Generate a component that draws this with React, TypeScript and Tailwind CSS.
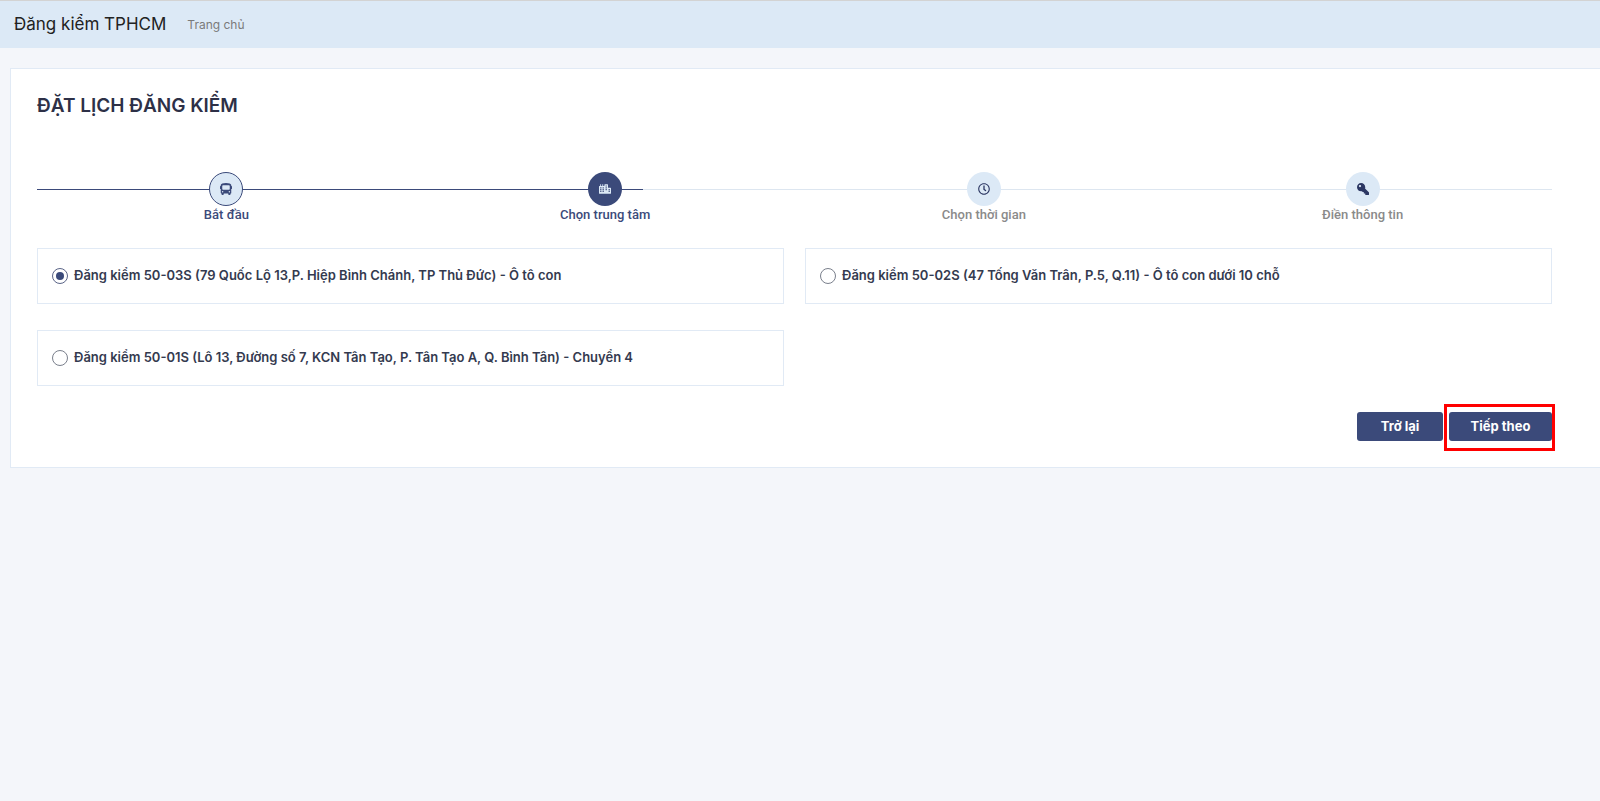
import { FaBus, FaCity, FaRegClock, FaKey } from "react-icons/fa";

const steps = [
  { label: "Bắt đầu", icon: FaBus, state: "done" },
  { label: "Chọn trung tâm", icon: FaCity, state: "active" },
  { label: "Chọn thời gian", icon: FaRegClock, state: "todo" },
  { label: "Điền thông tin", icon: FaKey, state: "todo" },
] as const;

const centers = [
  { id: "50-03S", text: "Đăng kiểm 50-03S (79 Quốc Lộ 13,P. Hiệp Bình Chánh, TP Thủ Đức) - Ô tô con" },
  { id: "50-02S", text: "Đăng kiểm 50-02S (47 Tống Văn Trân, P.5, Q.11) - Ô tô con dưới 10 chỗ" },
  { id: "50-01S", text: "Đăng kiểm 50-01S (Lô 13, Đường số 7, KCN Tân Tạo, P. Tân Tạo A, Q. Bình Tân) - Chuyển 4" },
];

function Stepper() {
  return (
    <div className="relative mt-[55px]">
      {/* track */}
      <div className="absolute left-0 right-0 top-[17px] h-px bg-[#dde6f0]" />
      <div className="absolute left-0 top-[17px] h-px w-[40%] bg-[#3b4a7a]" />
      <div className="relative grid grid-cols-4">
        {steps.map((s) => {
          const Icon = s.icon;
          return (
            <div key={s.label} className="flex flex-col items-center">
              <div
                className={
                  s.state === "active"
                    ? "flex h-[34px] w-[34px] items-center justify-center rounded-full bg-[#3b4a7a] text-[#dce9f6]"
                    : s.state === "done"
                      ? "flex h-[34px] w-[34px] items-center justify-center rounded-full border border-[#3b4a7a] bg-[#dce9f6] text-[#3b4a7a]"
                      : "flex h-[34px] w-[34px] items-center justify-center rounded-full bg-[#dce9f6] text-[#2c3763]"
                }
              >
                <Icon className={"h-[12px] w-[12px]" + (s.label === "Điền thông tin" ? " -scale-x-100" : "")} />
              </div>
              <span
                className={
                  "mt-px font-['Roboto',sans-serif] text-[13px] font-medium leading-[16px] " +
                  (s.state === "todo" ? "text-[#8a8a8a]" : "text-[#3b4a7a]")
                }
              >
                {s.label}
              </span>
            </div>
          );
        })}
      </div>
    </div>
  );
}

function Radio({ checked }: { checked: boolean }) {
  return (
    <span
      className={
        "flex h-[16px] w-[16px] shrink-0 items-center justify-center rounded-full border " +
        (checked ? "border-[#5a6487]" : "border-[#7a7f8c]")
      }
    >
      {checked && <span className="h-[8px] w-[8px] rounded-full bg-[#3b4a7a]" />}
    </span>
  );
}

export default function App() {
  return (
    <div className="min-h-[801px] bg-[#f4f6fa] font-['Inter',sans-serif]">
      <header className="flex h-[48px] items-center gap-[21px] border-t border-[#d3d3d3] bg-[#dce9f6] pl-[14px]">
        <span className="text-[17px] text-[#222]">Đăng kiểm TPHCM</span>
        <span className="text-[12px] text-[#7a7a7a]">Trang chủ</span>
      </header>

      <div className="pl-[10px] pt-[20px]">
        <div className="border-y border-l border-[#e1eaf5] bg-white pb-[26px] pl-[26px] pr-[48px] pt-[26px]">
          <h1 className="text-[19px] font-semibold uppercase leading-[22px] text-[#2d3047]">ĐẶT LỊCH ĐĂNG KIỂM</h1>

          <Stepper />

          <div className="mt-[25px] grid grid-cols-2 gap-x-[21px] gap-y-[26px]">
            {centers.map((c, i) => (
              <label
                key={c.id}
                className="flex h-[56px] items-center gap-[6px] border border-[#e1eaf5] px-[14px] text-[13px] font-semibold text-[#343a4f]"
              >
                <Radio checked={i === 0} />
                <span>{c.text}</span>
              </label>
            ))}
          </div>

          <div className="mt-[26px] flex justify-end gap-[6px]">
            <button
              type="button"
              className="h-[29px] w-[86px] rounded-[3px] bg-[#3b4a7a] text-[13px] font-bold text-white"
            >
              Trở lại
            </button>
            <div className="relative">
              <button
                type="button"
                className="h-[29px] w-[103px] rounded-[3px] bg-[#3b4a7a] text-[13px] font-bold text-white"
              >
                Tiếp theo
              </button>
              <div className="pointer-events-none absolute -bottom-[10px] -left-[5px] -right-[3px] -top-[8px] border-[3px] border-[#ff0000]" />
            </div>
          </div>
        </div>
      </div>
    </div>
  );
}
